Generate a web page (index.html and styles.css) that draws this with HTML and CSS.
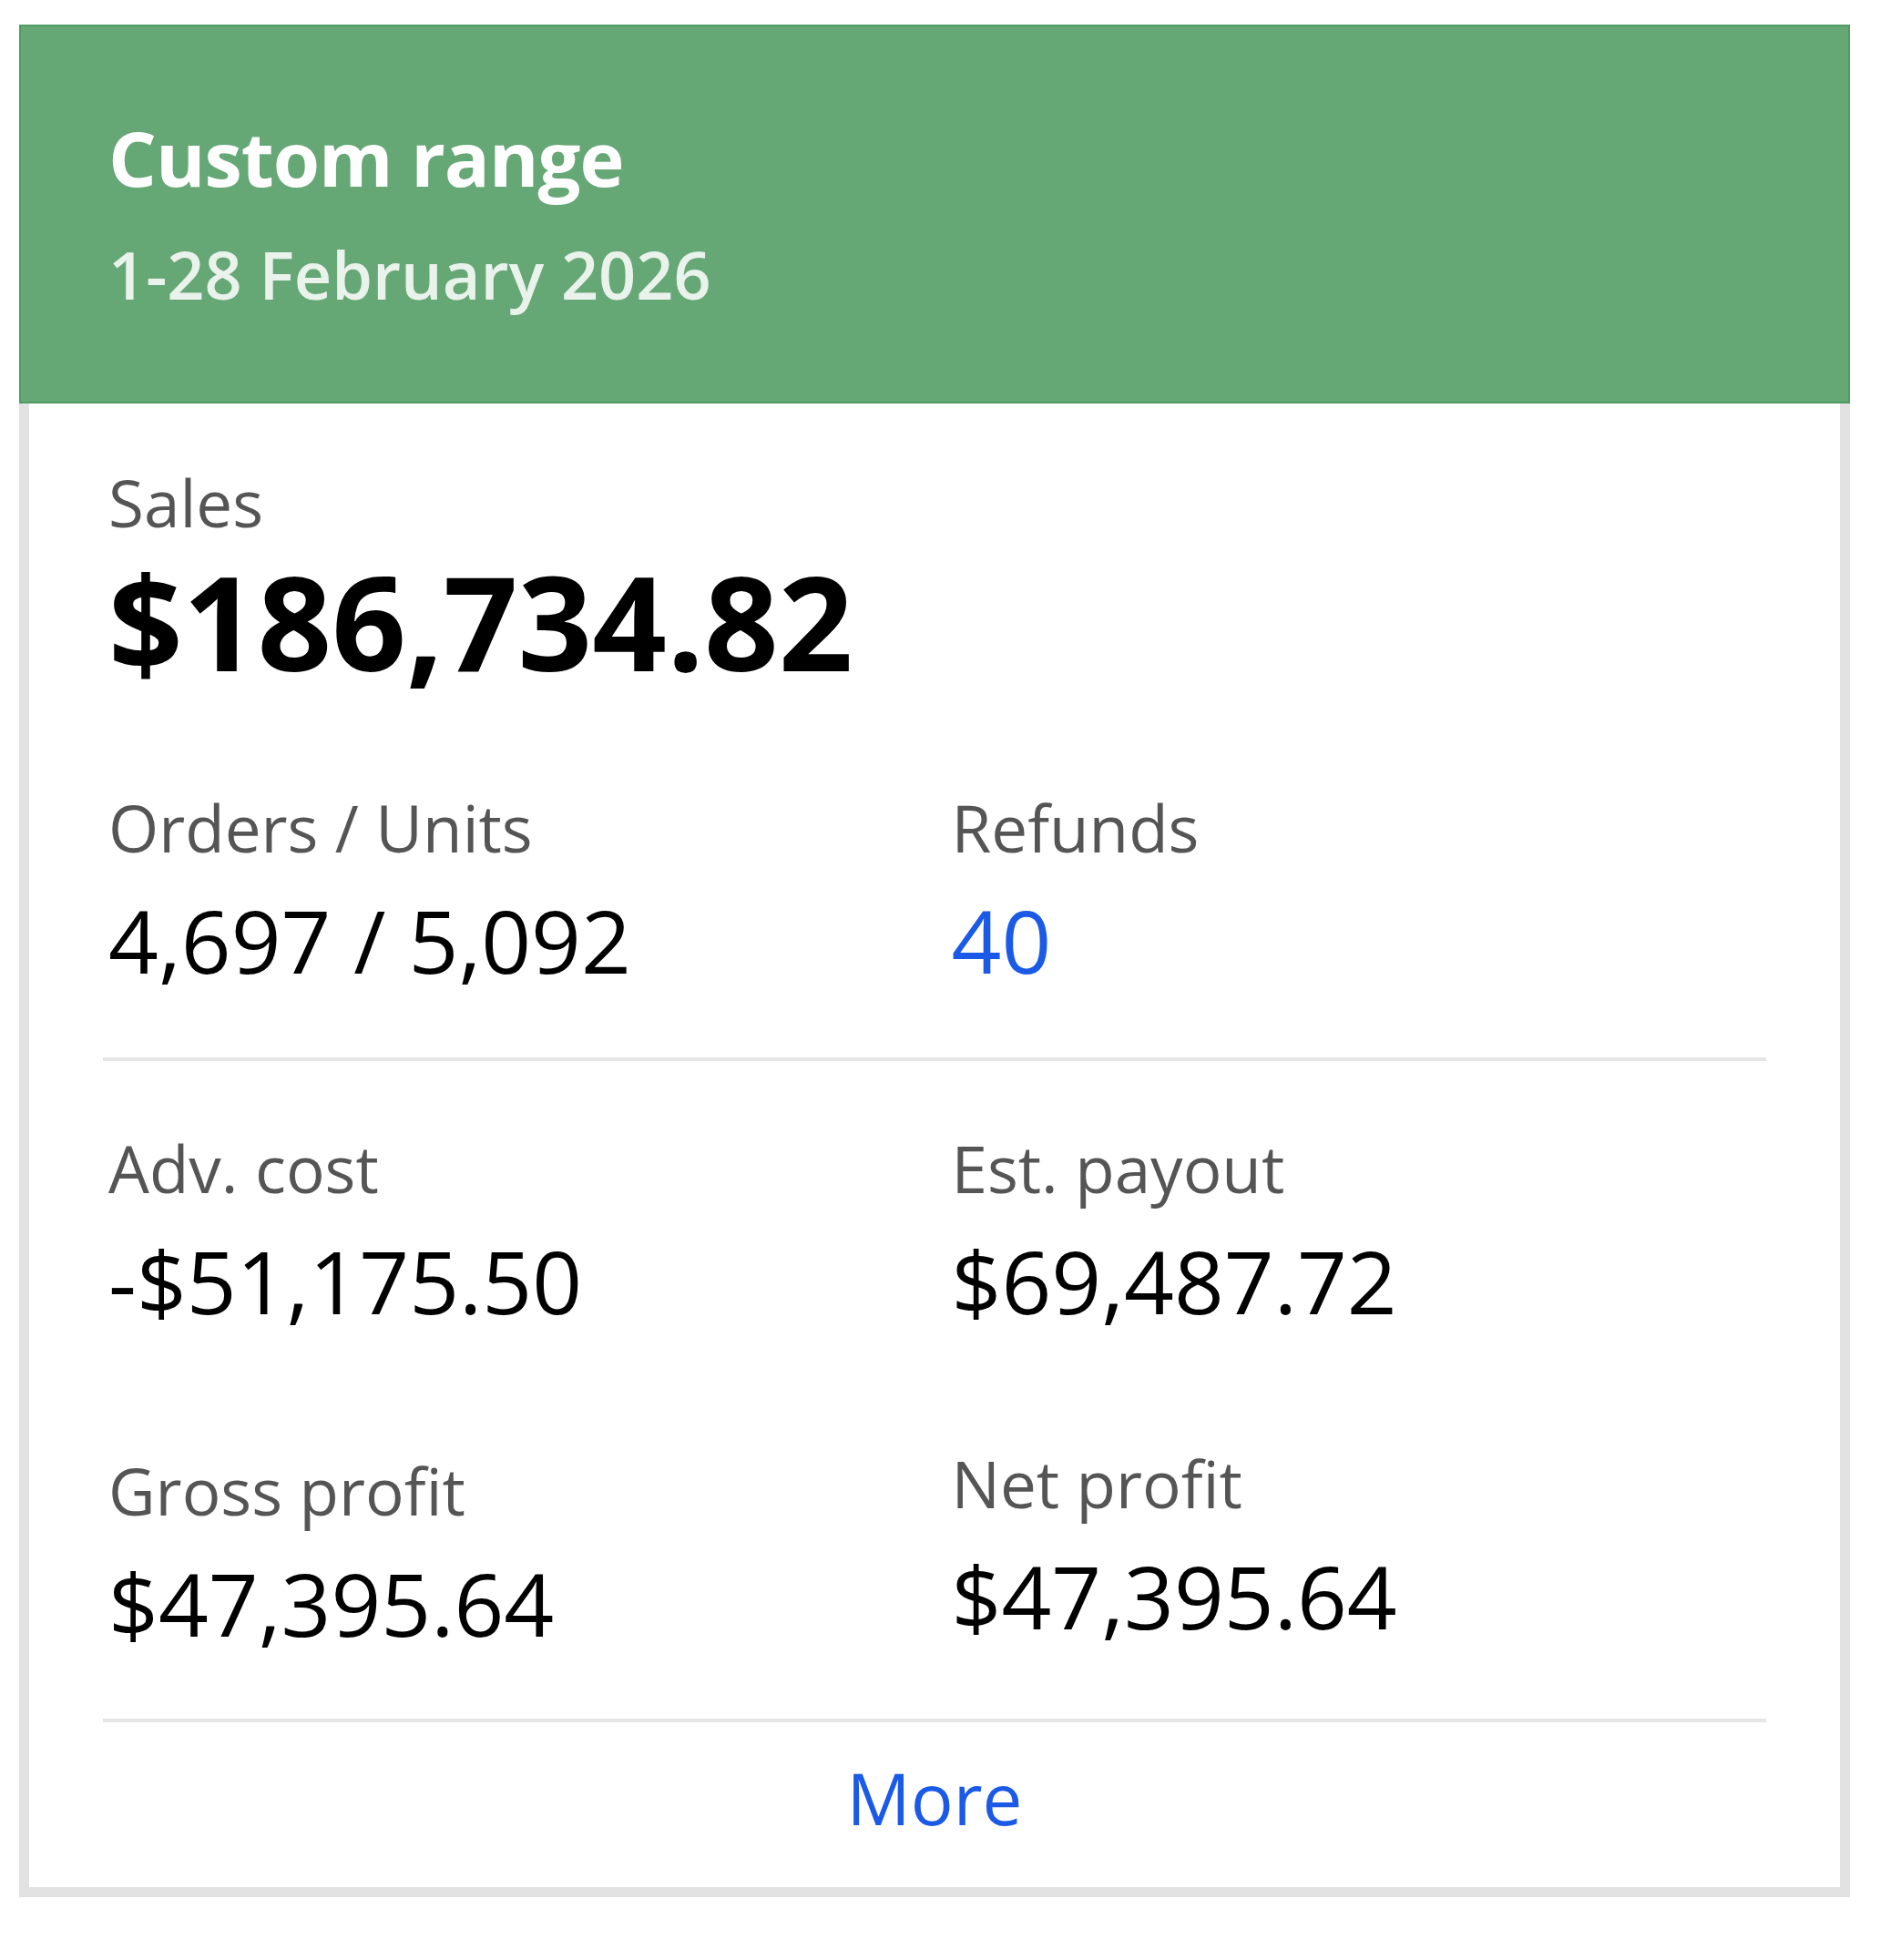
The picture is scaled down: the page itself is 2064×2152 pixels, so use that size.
FILE: index.html
```html
<!DOCTYPE html>
<html lang="en">
<head>
    <meta charset="UTF-8">
    <meta name="viewport" content="width=device-width, initial-scale=1.0">
    <title>Custom range</title>
    <link rel="stylesheet" href="styles.css">
</head>
<body>

    <!-- Tarjeta de resumen -->
    <div class="card">
        <div class="card-header">
            <h2 class="title">Custom range</h2>
            <div class="subtitle">1-28 February 2026</div>
        </div>

        <div class="card-body">
            <div class="stat">
                <div class="label">Sales</div>
                <div class="value value-big">$186,734.82</div>
            </div>

            <div class="row">
                <div class="stat">
                    <div class="label">Orders / Units</div>
                    <div class="value">4,697 / 5,092</div>
                </div>
                <div class="stat">
                    <div class="label">Refunds</div>
                    <div class="value link">40</div>
                </div>
            </div>

            <div class="divider"></div>

            <div class="row">
                <div class="stat">
                    <div class="label">Adv. cost</div>
                    <div class="value">-$51,175.50</div>
                </div>
                <div class="stat">
                    <div class="label">Est. payout</div>
                    <div class="value">$69,487.72</div>
                </div>
            </div>

            <div class="row">
                <div class="stat">
                    <div class="label">Gross profit</div>
                    <div class="value">$47,395.64</div>
                </div>
                <div class="stat stat-up">
                    <div class="label">Net profit</div>
                    <div class="value">$47,395.64</div>
                </div>
            </div>

            <div class="divider divider-bottom"></div>

            <div class="more"><a href="#" class="link">More</a></div>
        </div>
    </div>

</body>
</html>
```

FILE: styles.css
```css
body {
    margin: 0;
    padding: 27px 0 0 21px;
    background-color: #ffffff;
    font-family: 'Open Sans', sans-serif;
}

/* Tarjeta */
.card {
    width: 2010px;
    box-sizing: border-box;
    border: 11px solid #e2e2e2;
    border-top: none;
    background-color: #ffffff;
}
.card-header {
    background-color: #66a776;
    border: 2px solid #4f9a61;
    margin: 0 -11px;
    height: 416px;
    box-sizing: border-box;
    padding: 88px 0 0 96px;
    color: #ffffff;
}
.title {
    margin: 0;
    font-size: 83px;
    font-weight: 700;
    letter-spacing: -1px;
    line-height: 112px;
}
.subtitle {
    margin-top: 24px;
    font-size: 72px;
    font-weight: 600;
    line-height: 96px;
    color: #e9f2eb;
}

/* Cuerpo */
.card-body {
    padding: 61px 81px 46px 81px;
}
.row {
    display: grid;
    grid-template-columns: 1fr 1fr;
    column-gap: 25px;
}
.stat {
    padding-left: 6px;
}
.label {
    font-size: 71px;
    line-height: 96px;
    color: #555555;
}
.value {
    margin-top: 10px;
    font-size: 96px;
    line-height: 130px;
    color: #000000;
}
.value-big {
    margin-top: 0;
    font-size: 143px;
    font-weight: 700;
    line-height: 164px;
    margin-bottom: 97px;
}
.link {
    color: #1a5ae6;
    text-decoration: none;
}
.divider {
    height: 4px;
    background-color: #e6e6e6;
    margin: 64px 0 70px;
}
.row + .row {
    margin-top: 118px;
}
.stat-up {
    margin-top: -8px;
}
.divider-bottom {
    margin: 62px 0 31px;
}
.more {
    text-align: center;
    font-size: 78px;
    line-height: 104px;
}
```
